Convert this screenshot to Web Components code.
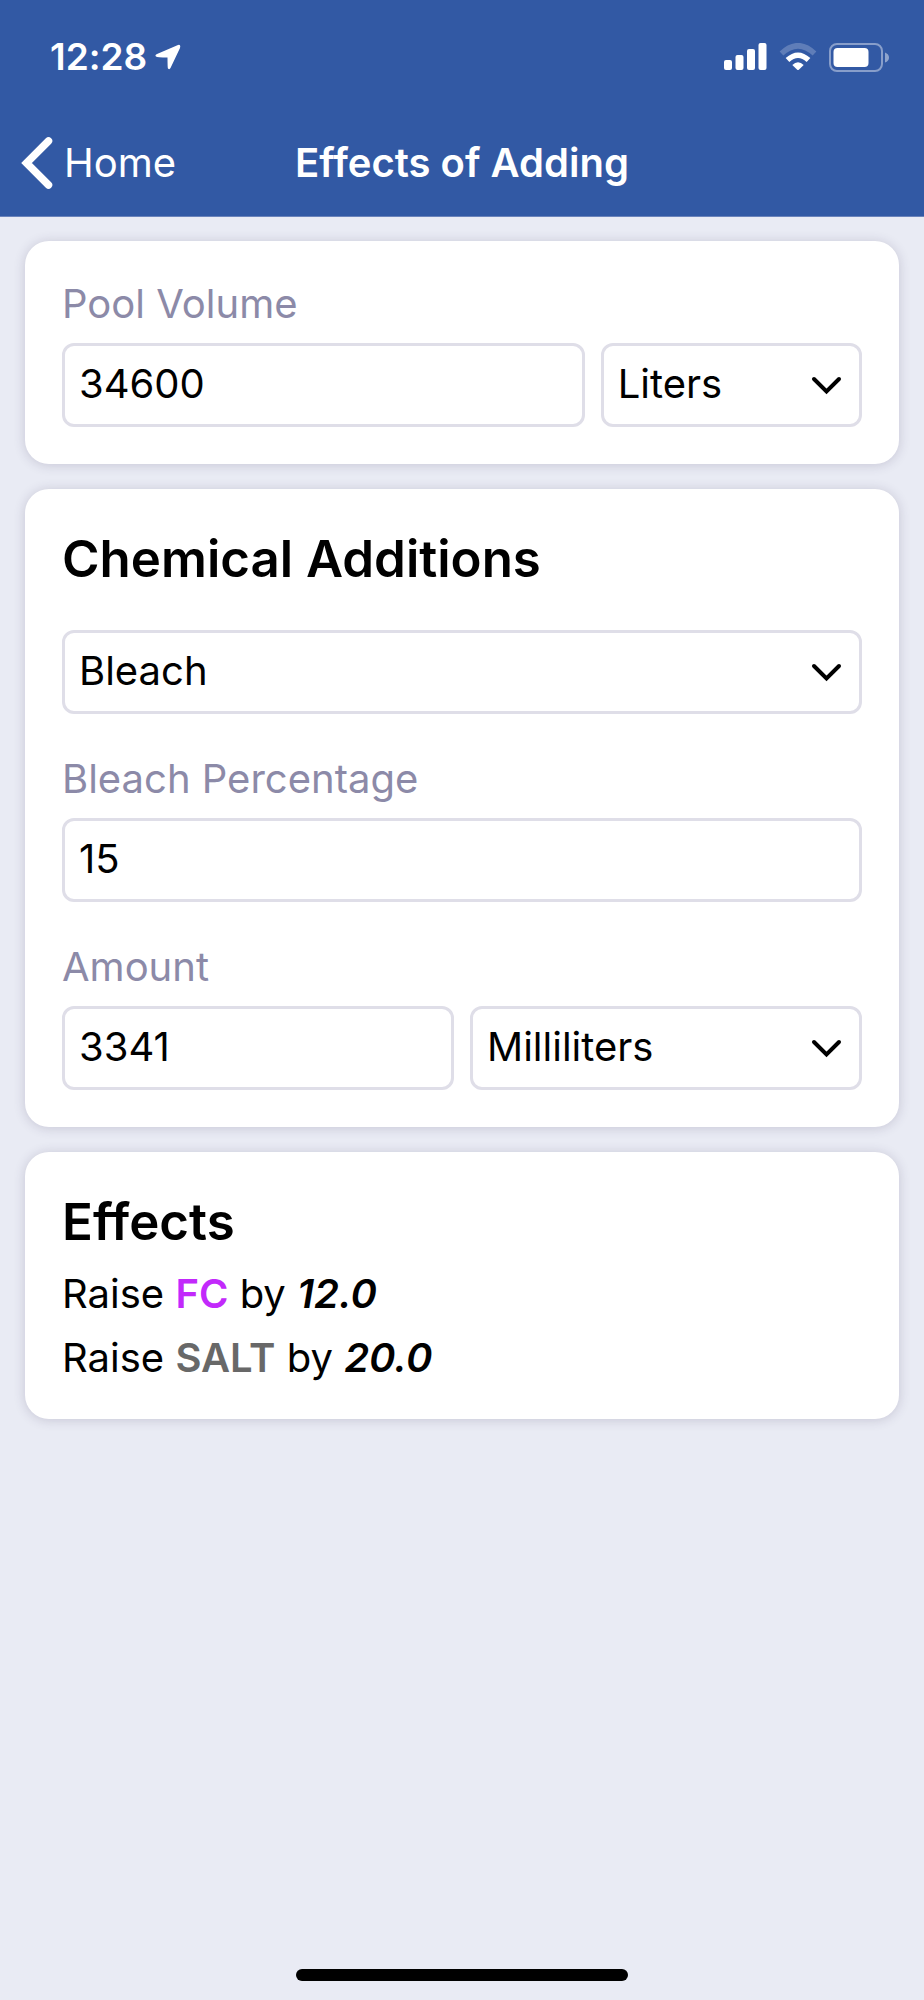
<!DOCTYPE html>
<html lang="en">
<head>
<meta charset="utf-8">
<meta name="viewport" content="width=device-width, initial-scale=1">
<title>Effects of Adding</title>
<style>
  html, body { margin: 0; }
  body {
    --brand: #3259a4;
    --page: #e9ebf4;
    --muted: #8c8aa8;
    --line: #dfdee8;
    --text: 40px;
    background: var(--page);
    color: #000;
    font-family: Inter, "Liberation Sans", sans-serif;
    font-size: var(--text);
    font-variant-ligatures: none;
  }
</style>
</head>
<body>
<pool-app></pool-app>

<script>
const define = (name, html, setup) => {
  const template = document.createElement('template');
  template.innerHTML = html;
  customElements.define(name, class extends HTMLElement {
    constructor() {
      super();
      this.attachShadow({ mode: 'open' }).append(template.content.cloneNode(true));
    }
    connectedCallback() {
      if (setup) setup(this, this.shadowRoot);
    }
  });
};

define('status-bar', `
  <style>
    :host { display: flex; justify-content: space-between; align-items: center; height: 44px; padding: 0 34px 0 50px; color: #fff; }
    div { display: flex; align-items: center; }
    .left { gap: 8px; }
    .right { gap: 12px; }
    time { font-size: 37px; font-weight: 600; line-height: 44px; }
    svg { display: block; }
  </style>
  <div class="left">
    <time>12:28</time>
    <svg width="26" height="26" viewBox="0 0 26 26" aria-label="Location"><path d="M23 1Q26 0 25 4L15.500 24Q14.500 26 13 24.500Q12.500 24 12.500 13.500Q2 13.500 1 12.500Q-.5 11 2 10Z" fill="currentColor"/></svg>
  </div>
  <div class="right">
    <svg width="43" height="28" viewBox="0 0 43 28" fill="currentColor" aria-label="Signal"><rect y="17" width="8" height="10" rx="2"/><rect x="11.500" y="12" width="8" height="15" rx="2"/><rect x="23" y="6" width="8" height="21" rx="2"/><rect x="34.500" y="0" width="8" height="27" rx="2"/></svg>
    <svg width="38" height="28" viewBox="0 0 38 28" aria-label="Wi-Fi"><path d="M2.500 10.500Q19-5 35.500 10.500" fill="none" stroke="#fff" stroke-opacity=".22" stroke-width="5.500"/><path d="M8.500 17Q19 7.500 29.500 17" fill="none" stroke="#fff" stroke-width="5.500"/><path d="M13.300 22Q19 16.500 24.700 22L19.800 26.700Q19 27.400 18.200 26.700Z" fill="#fff"/></svg>
    <svg width="61" height="29" viewBox="0 0 61 29" aria-label="Battery"><rect x="1" y="1" width="52" height="27" rx="7" fill="none" stroke="#fff" stroke-opacity=".42" stroke-width="2"/><rect x="4.500" y="5" width="35" height="19" rx="4" fill="#fff"/><path d="M56 9.500Q60 11 60 14.500T56 19.500Z" fill="#fff" fill-opacity=".45"/></svg>
  </div>
`);

define('nav-bar', `
  <style>
    :host { display: grid; grid-template-columns: 1fr auto 1fr; align-items: center; height: 104px; padding: 0 20px; color: #fff; }
    a { display: flex; align-items: center; gap: 11px; justify-self: start; color: inherit; text-decoration: none; line-height: 48px; }
    h1 { margin: 0; font-size: var(--text); font-weight: 600; line-height: 48px; }
    svg { display: block; }
  </style>
  <a href="#home">
    <svg width="33" height="54" viewBox="0 0 33 54" aria-hidden="true"><path d="M28.500 5L6.500 27L28.500 49" fill="none" stroke="currentColor" stroke-width="7.500" stroke-linecap="round" stroke-linejoin="miter"/></svg>
    <slot name="back"></slot>
  </a>
  <h1><slot></slot></h1>
`);

define('info-card', `
  <style>
    :host { display: flex; flex-direction: column; gap: var(--card-gap, 39px); padding: 37px; border-radius: 24px; background: #fff; box-shadow: 0 1px 12px rgba(60, 50, 90, .2); }
    h2 { margin: 0; font-size: 51px; font-weight: 600; line-height: 65px; }
    h2[hidden] { display: none; }
  </style>
  <h2></h2>
  <slot></slot>
`, (host, root) => {
  const h2 = root.querySelector('h2');
  h2.textContent = host.getAttribute('heading') || '';
  h2.hidden = !h2.textContent;
});

const controlStyle = `
  :host { display: block; flex: 1 1 0; min-width: 0; }
  label { display: block; height: 52px; margin-bottom: 13px; color: var(--muted); line-height: 52px; white-space: nowrap; }
  label[hidden] { display: none; }
  input, select { display: block; box-sizing: border-box; width: 100%; height: 84px; margin: 0; padding: 0 14px 4px; border: 3px solid var(--line); border-radius: 12px; background: #fff; color: #000; font: inherit; line-height: 48px; appearance: none; outline: none; }
`;

define('text-field', `
  <style>${controlStyle}</style>
  <label for="control"></label>
  <input id="control" type="text" inputmode="decimal">
`, (host, root) => {
  root.querySelector('label').textContent = host.getAttribute('label');
  root.querySelector('input').value = host.getAttribute('value');
});

define('select-field', `
  <style>${controlStyle}
    .box { display: grid; align-items: center; }
    select, svg { grid-area: 1 / 1; }
    select { padding-bottom: 2px; }
    svg { justify-self: end; margin-right: 20px; pointer-events: none; }
  </style>
  <div class="box">
    <select></select>
    <svg width="31" height="20" viewBox="0 0 31 20" aria-hidden="true"><path d="M3 4L15.500 16.500L28 4" fill="none" stroke="#000" stroke-width="4" stroke-linecap="round"/></svg>
  </div>
`, (host, root) => {
  const select = root.querySelector('select');
  select.setAttribute('aria-label', host.getAttribute('label'));
  select.replaceChildren(...host.getAttribute('options').split(',').map(o => new Option(o)));
});

define('field-row', `
  <style>:host { display: flex; align-items: flex-end; gap: 16px; }</style>
  <slot></slot>
`);

define('effect-line', `
  <style>
    :host { display: block; line-height: 48px; }
    b { font-weight: 600; }
    em { font-weight: 600; font-style: italic; }
  </style>
  Raise <b></b> by <em></em>
`, (host, root) => {
  const b = root.querySelector('b');
  b.textContent = host.getAttribute('chemical');
  b.style.color = host.getAttribute('tint');
  root.querySelector('em').textContent = host.getAttribute('amount');
});

define('pool-app', `
  <style>
    :host { display: flex; flex-direction: column; min-height: 100vh; }
    header { padding: 35px 0 1px; background: var(--brand); border-bottom: 1px solid #6a83bb; }
    nav-bar { margin-top: 32px; }
    main { display: flex; flex-direction: column; gap: 25px; padding: 24px 25px; }
    .volume { flex-grow: 2; }
    .effects { --card-gap: 16px; }
    .wide { flex: none; }
    footer { margin-top: auto; padding-bottom: 19px; }
    footer::before { content: ""; display: block; width: 36%; height: 12px; margin: 0 auto; border-radius: 6px; background: #000; }
  </style>
  <header>
    <status-bar></status-bar>
    <nav-bar><span slot="back">Home</span>Effects of Adding</nav-bar>
  </header>
  <main>
    <info-card>
      <field-row>
        <text-field class="volume" label="Pool Volume" value="34600"></text-field>
        <select-field label="Volume unit" options="Liters,Gallons"></select-field>
      </field-row>
    </info-card>
    <info-card heading="Chemical Additions">
      <select-field class="wide" label="Chemical" options="Bleach,Salt"></select-field>
      <text-field class="wide" label="Bleach Percentage" value="15"></text-field>
      <field-row>
        <text-field label="Amount" value="3341"></text-field>
        <select-field label="Amount unit" options="Milliliters,Liters"></select-field>
      </field-row>
    </info-card>
    <info-card class="effects" heading="Effects">
      <effect-line chemical="FC" tint="#c229fb" amount="12.0"></effect-line>
      <effect-line chemical="SALT" tint="#686868" amount="20.0"></effect-line>
    </info-card>
  </main>
  <footer></footer>
`);
</script>
</body>
</html>
